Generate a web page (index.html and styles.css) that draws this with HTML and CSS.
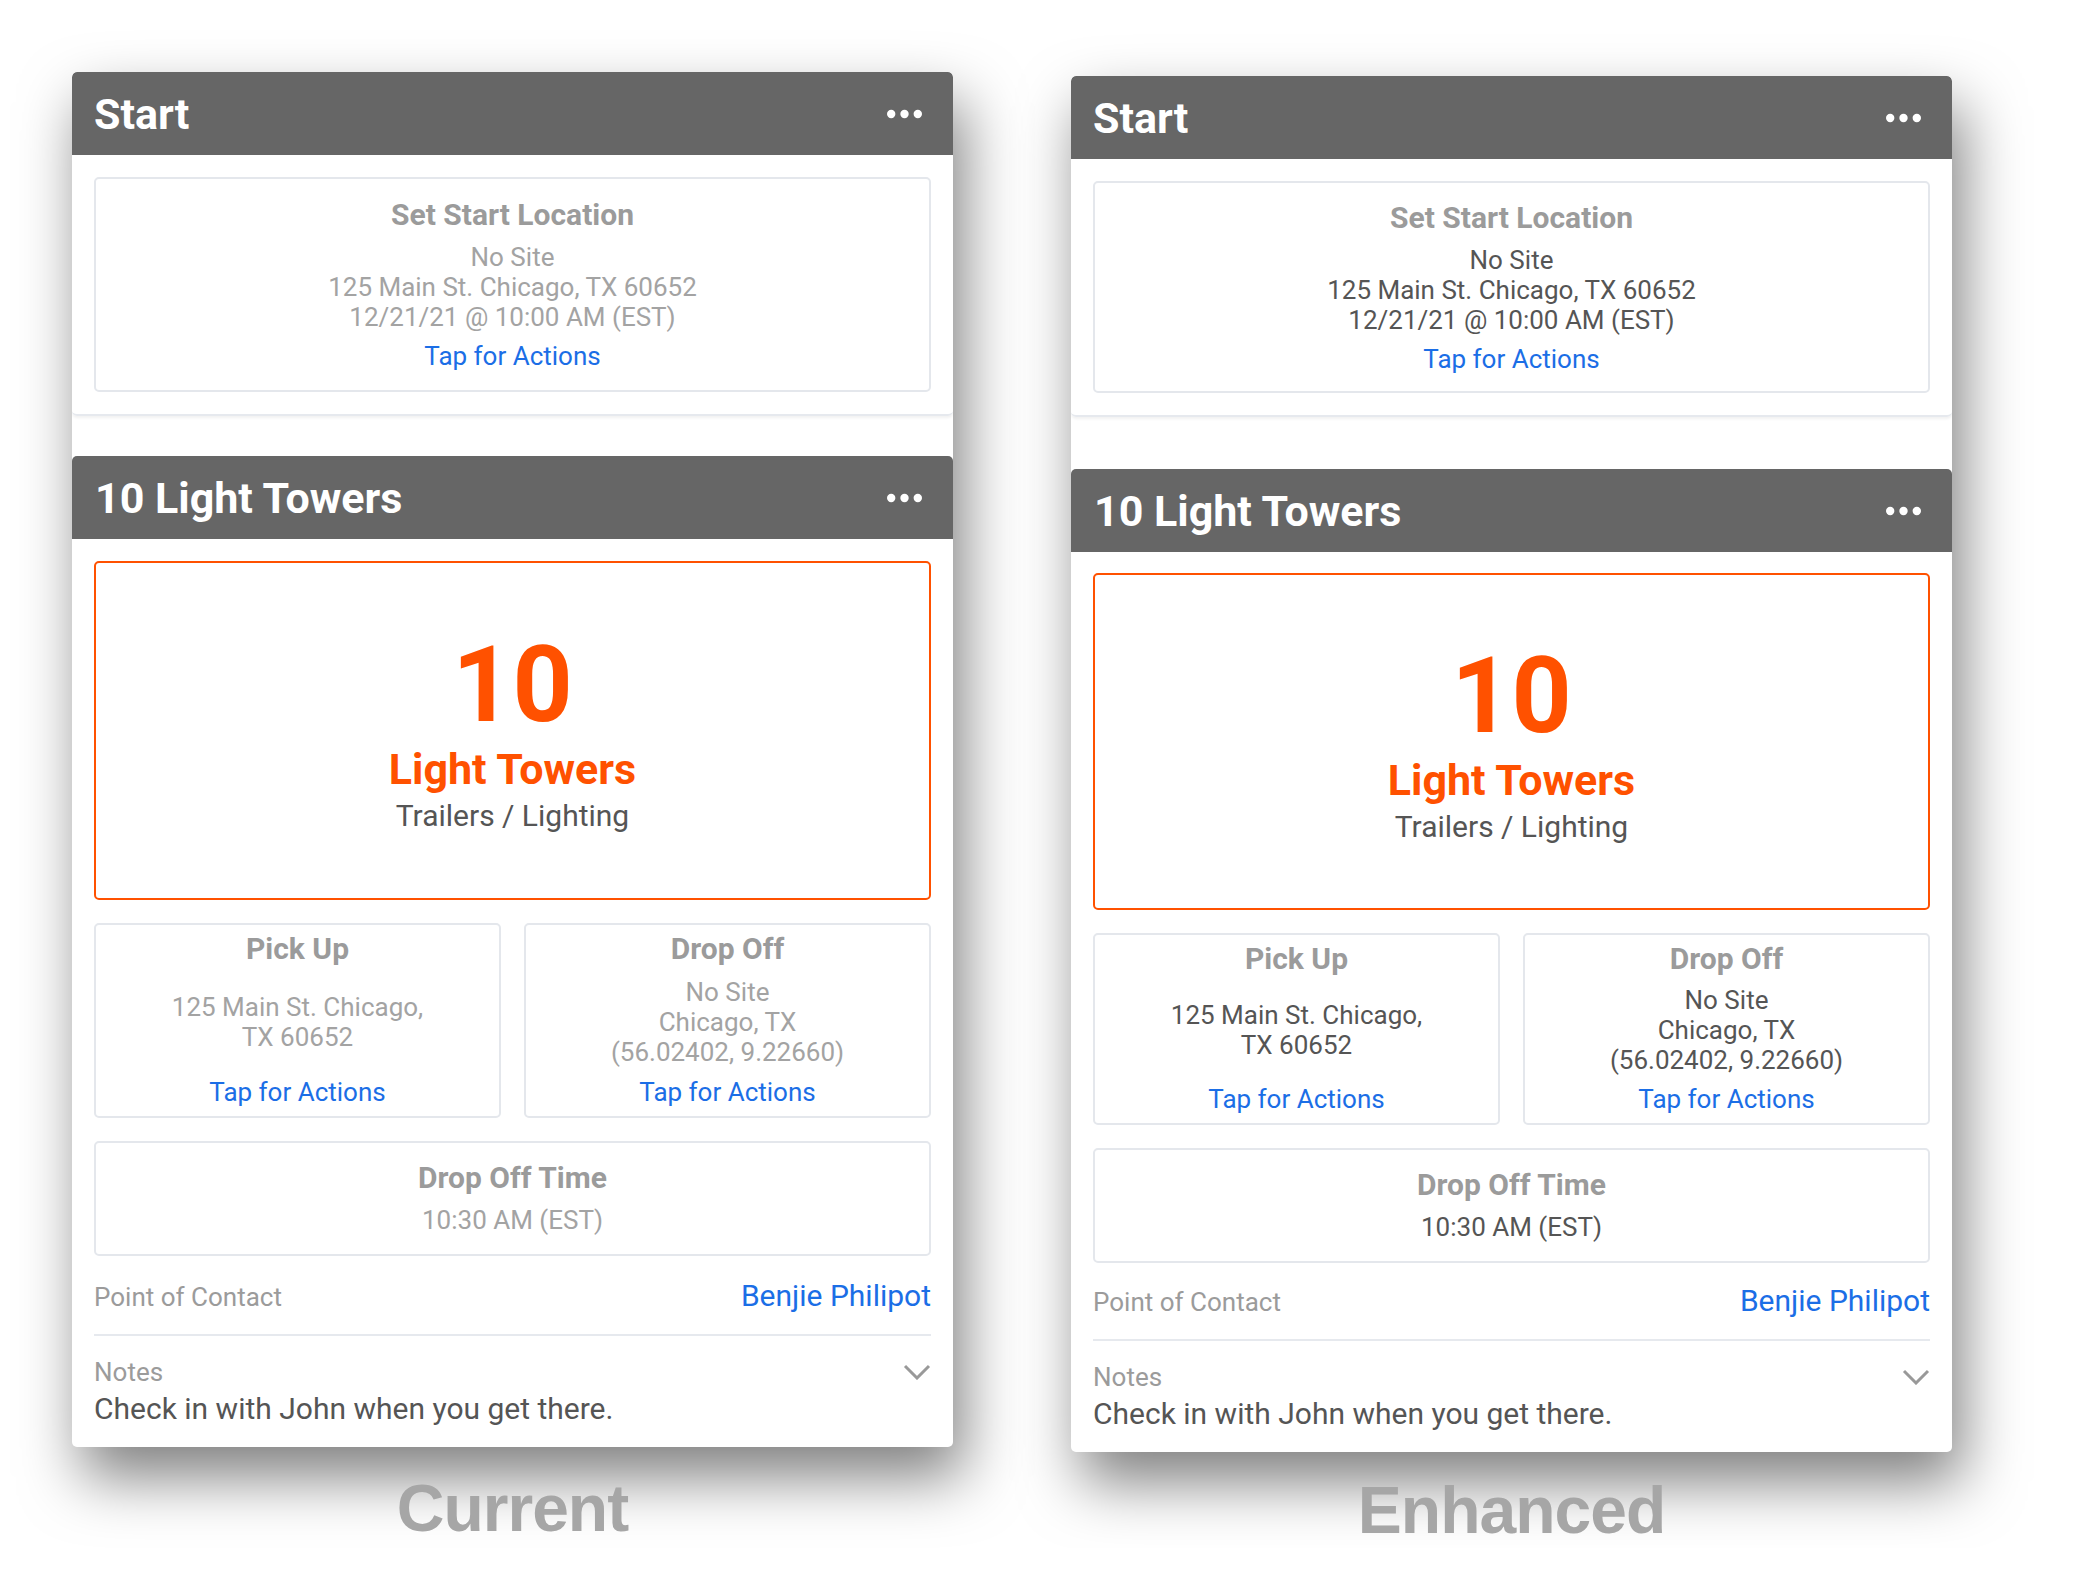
FILE: index.html
```html
<!DOCTYPE html>
<html lang="en">
<head>
    <meta charset="UTF-8">
    <title>Current vs Enhanced</title>
    <link rel="stylesheet" href="styles.css">
</head>
<body>
    <div class="page">

        <!-- Current -->
        <div class="column">
            <div class="panel">
                <div class="section start">
                    <div class="card-head">
                        <span>Start</span>
                        <svg class="dots" width="36" height="10" viewBox="0 0 36 10"><circle cx="4.2" cy="5" r="4.2"/><circle cx="17.5" cy="5" r="4.2"/><circle cx="30.8" cy="5" r="4.2"/></svg>
                    </div>
                    <div class="card-body">
                        <div class="box loc-box">
                            <div class="box-title">Set Start Location</div>
                            <div class="lines">
                                <div>No Site</div>
                                <div>125 Main St. Chicago, TX 60652</div>
                                <div>12/21/21 @ 10:00 AM (EST)</div>
                            </div>
                            <div class="tap">Tap for Actions</div>
                        </div>
                    </div>
                </div>

                <div class="section towers">
                    <div class="card-head">
                        <span>10 Light Towers</span>
                        <svg class="dots" width="36" height="10" viewBox="0 0 36 10"><circle cx="4.2" cy="5" r="4.2"/><circle cx="17.5" cy="5" r="4.2"/><circle cx="30.8" cy="5" r="4.2"/></svg>
                    </div>
                    <div class="card-body">
                        <div class="qty-box">
                            <div class="qty">10</div>
                            <div class="qty-name">Light Towers</div>
                            <div class="qty-cat">Trailers / Lighting</div>
                        </div>

                        <div class="stops">
                            <div class="box stop-box">
                                <div class="box-title">Pick Up</div>
                                <div class="lines stop-lines">
                                    <div>125 Main St. Chicago,</div>
                                    <div>TX 60652</div>
                                </div>
                                <div class="tap">Tap for Actions</div>
                            </div>
                            <div class="box stop-box">
                                <div class="box-title">Drop Off</div>
                                <div class="lines stop-lines">
                                    <div>No Site</div>
                                    <div>Chicago, TX</div>
                                    <div>(56.02402, 9.22660)</div>
                                </div>
                                <div class="tap">Tap for Actions</div>
                            </div>
                        </div>

                        <div class="box time-box">
                            <div class="box-title">Drop Off Time</div>
                            <div class="lines">
                                <div>10:30 AM (EST)</div>
                            </div>
                        </div>

                        <div class="contact">
                            <span class="label">Point of Contact</span>
                            <span class="contact-name">Benjie Philipot</span>
                        </div>

                        <div class="notes-head">
                            <span class="label">Notes</span>
                            <svg class="chevron" width="28" height="16" viewBox="0 0 28 16"><polyline points="2,2 14,14 26,2"/></svg>
                        </div>
                        <div class="notes-text">Check in with John when you get there.</div>
                    </div>
                </div>
            </div>
            <div class="caption">Current</div>
        </div>

        <!-- Enhanced -->
        <div class="column enhanced">
            <div class="panel">
                <div class="section start">
                    <div class="card-head">
                        <span>Start</span>
                        <svg class="dots" width="36" height="10" viewBox="0 0 36 10"><circle cx="4.2" cy="5" r="4.2"/><circle cx="17.5" cy="5" r="4.2"/><circle cx="30.8" cy="5" r="4.2"/></svg>
                    </div>
                    <div class="card-body">
                        <div class="box loc-box">
                            <div class="box-title">Set Start Location</div>
                            <div class="lines">
                                <div>No Site</div>
                                <div>125 Main St. Chicago, TX 60652</div>
                                <div>12/21/21 @ 10:00 AM (EST)</div>
                            </div>
                            <div class="tap">Tap for Actions</div>
                        </div>
                    </div>
                </div>

                <div class="section towers">
                    <div class="card-head">
                        <span>10 Light Towers</span>
                        <svg class="dots" width="36" height="10" viewBox="0 0 36 10"><circle cx="4.2" cy="5" r="4.2"/><circle cx="17.5" cy="5" r="4.2"/><circle cx="30.8" cy="5" r="4.2"/></svg>
                    </div>
                    <div class="card-body">
                        <div class="qty-box">
                            <div class="qty">10</div>
                            <div class="qty-name">Light Towers</div>
                            <div class="qty-cat">Trailers / Lighting</div>
                        </div>

                        <div class="stops">
                            <div class="box stop-box">
                                <div class="box-title">Pick Up</div>
                                <div class="lines stop-lines">
                                    <div>125 Main St. Chicago,</div>
                                    <div>TX 60652</div>
                                </div>
                                <div class="tap">Tap for Actions</div>
                            </div>
                            <div class="box stop-box">
                                <div class="box-title">Drop Off</div>
                                <div class="lines stop-lines">
                                    <div>No Site</div>
                                    <div>Chicago, TX</div>
                                    <div>(56.02402, 9.22660)</div>
                                </div>
                                <div class="tap">Tap for Actions</div>
                            </div>
                        </div>

                        <div class="box time-box">
                            <div class="box-title">Drop Off Time</div>
                            <div class="lines">
                                <div>10:30 AM (EST)</div>
                            </div>
                        </div>

                        <div class="contact">
                            <span class="label">Point of Contact</span>
                            <span class="contact-name">Benjie Philipot</span>
                        </div>

                        <div class="notes-head">
                            <span class="label">Notes</span>
                            <svg class="chevron" width="28" height="16" viewBox="0 0 28 16"><polyline points="2,2 14,14 26,2"/></svg>
                        </div>
                        <div class="notes-text">Check in with John when you get there.</div>
                    </div>
                </div>
            </div>
            <div class="caption">Enhanced</div>
        </div>

    </div>
</body>
</html>
```

FILE: styles.css
```css
body {
    margin: 0;
    background-color: #fff;
    font-family: Roboto, "Liberation Sans", sans-serif;
}

.page {
    display: flex;
    align-items: flex-start;
    gap: 118px;
    padding: 72px 0 0 72px;
}

.column {
    width: 881px;
    display: flex;
    flex-direction: column;
    align-items: center;
}

.column.enhanced {
    margin-top: 4px;
}

/* Панель с карточками */
.panel {
    width: 881px;
    background-color: #fff;
    border-radius: 5px;
    overflow: hidden;
    box-shadow: 10px 30px 60px rgba(0, 0, 0, 0.5);
}

.section.start {
    border-bottom: 2px solid #e6e9ee;
    border-radius: 0 0 5px 5px;
    box-shadow: 0 2px 3px rgba(0, 0, 0, 0.06);
    margin-bottom: 40px;
}

.enhanced .section.start {
    margin-bottom: 52px;
}

.card-head {
    height: 83px;
    background-color: #666;
    color: #fff;
    display: flex;
    align-items: center;
    justify-content: space-between;
    padding: 0 30px 0 22px;
    font-size: 43px;
    font-weight: 700;
    border-radius: 5px 5px 0 0;
}

.towers .card-head {
    padding-left: 23px;
}

.dots {
    fill: #fff;
}

.card-body {
    padding: 22px;
}

.enhanced .towers .card-body {
    padding-top: 21px;
}

/* Рамки */
.box {
    border: 2px solid #e4e7ec;
    border-radius: 5px;
    text-align: center;
}

.box-title {
    font-size: 30px;
    line-height: 34px;
    font-weight: 700;
    color: #9b9b9b;
}

.lines {
    font-size: 26px;
    line-height: 30px;
    color: #a3a3a3;
}

.enhanced .lines {
    color: #555;
}

.tap {
    font-size: 26px;
    line-height: 30px;
    color: #1b6ee6;
}

.loc-box {
    padding: 19px 20px;
}

.enhanced .loc-box {
    padding: 18px 20px 17px;
}

.loc-box .lines {
    margin-top: 10px;
}

.loc-box .tap {
    margin-top: 9px;
}

/* Количество */
.qty-box {
    height: 339px;
    box-sizing: border-box;
    border: 2px solid #ff5100;
    border-radius: 5px;
    display: flex;
    flex-direction: column;
    align-items: center;
    justify-content: center;
    padding-top: 5px;
}

.enhanced .qty-box {
    height: 337px;
}

.qty {
    font-size: 105px;
    line-height: 105px;
    font-weight: 700;
    color: #ff5100;
}

.qty-name {
    margin-top: 6px;
    font-size: 43px;
    line-height: 50px;
    font-weight: 700;
    color: #ff5100;
}

.qty-cat {
    margin-top: 5px;
    font-size: 30px;
    line-height: 34px;
    color: #555;
}

/* Pick Up / Drop Off */
.stops {
    display: grid;
    grid-template-columns: 1fr 1fr;
    gap: 23px;
    margin-top: 23px;
}

.stop-box {
    display: flex;
    flex-direction: column;
    padding: 7px 8px 9px;
}

.stop-lines {
    min-height: 111px;
    display: flex;
    flex-direction: column;
    justify-content: center;
}

.enhanced .stop-lines {
    min-height: 108px;
}

.time-box {
    margin-top: 23px;
    padding: 18px 20px 19px;
}

.time-box .lines {
    margin-top: 10px;
}

/* Контакт и заметки */
.label {
    font-size: 26px;
    line-height: 30px;
    color: #9b9b9b;
}

.contact {
    display: flex;
    justify-content: space-between;
    align-items: baseline;
    margin-top: 22px;
    padding-bottom: 20px;
    border-bottom: 2px solid #e6e9ee;
}

.enhanced .contact {
    margin-top: 20px;
}

.contact-name {
    font-size: 30px;
    line-height: 36px;
    color: #1b6ee6;
}

.notes-head {
    display: flex;
    justify-content: space-between;
    align-items: center;
    margin-top: 21px;
}

.chevron {
    fill: none;
    stroke: #999;
    stroke-width: 3;
}

.notes-text {
    margin-top: 5px;
    padding-bottom: 21px;
    font-size: 30px;
    line-height: 34px;
    color: #555;
}

.card-body .notes-text {
    margin-bottom: -22px;
}

/* Подписи */
.caption {
    margin-top: 23px;
    font-family: "Liberation Sans", Arial, sans-serif;
    font-size: 66px;
    line-height: 76px;
    font-weight: 700;
    letter-spacing: -1px;
    color: #a6a6a6;
}

.enhanced .caption {
    margin-top: 20px;
}
```
